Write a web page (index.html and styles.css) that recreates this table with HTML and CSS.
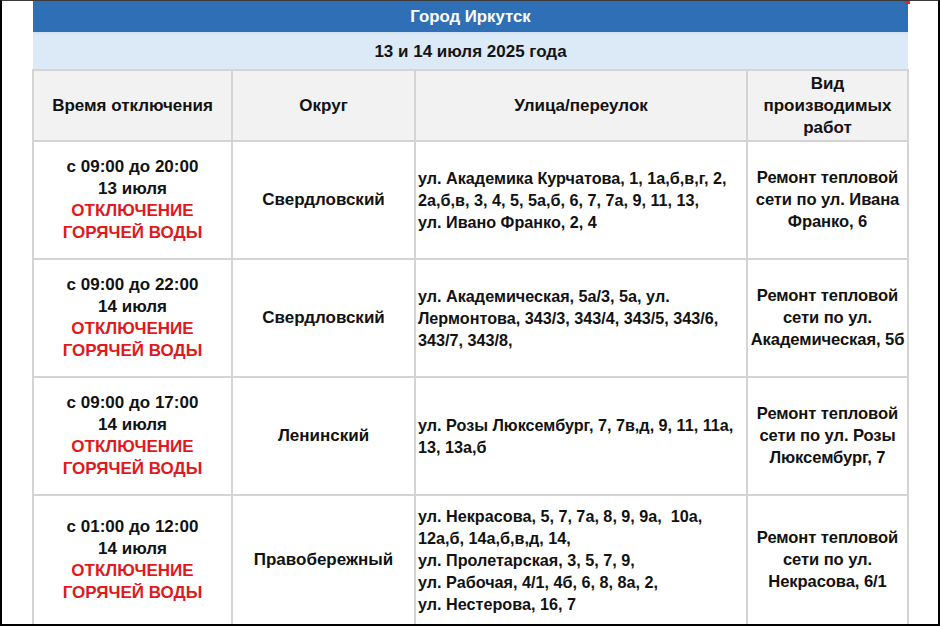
FILE: index.html
```html
<!DOCTYPE html>
<html lang="ru">
<head>
<meta charset="utf-8">
<title>Город Иркутск</title>
<link rel="stylesheet" href="styles.css">
</head>
<body>
<div class="frame">
  <table class="sched">
    <colgroup>
      <col class="c1"><col class="c2"><col class="c3"><col class="c4">
    </colgroup>
    <thead>
      <tr><th colspan="4" class="city">Город Иркутск</th></tr>
      <tr><th colspan="4" class="date">13 и 14 июля 2025 года</th></tr>
      <tr class="head">
        <th>Время отключения</th>
        <th>Округ</th>
        <th>Улица/переулок</th>
        <th>Вид производимых работ</th>
      </tr>
    </thead>
    <tbody>
      <tr>
        <td class="time">с 09:00 до 20:00<br>13 июля<br><span class="red">ОТКЛЮЧЕНИЕ<br>ГОРЯЧЕЙ ВОДЫ</span></td>
        <td class="dist">Свердловский</td>
        <td class="street">ул. Академика Курчатова, 1, 1а,б,в,г, 2,<br>2а,б,в, 3, 4, 5, 5а,б, 6, 7, 7а, 9, 11, 13,<br>ул. Ивано Франко, 2, 4</td>
        <td class="work">Ремонт тепловой<br>сети по ул. Ивана<br>Франко, 6</td>
      </tr>
      <tr>
        <td class="time">с 09:00 до 22:00<br>14 июля<br><span class="red">ОТКЛЮЧЕНИЕ<br>ГОРЯЧЕЙ ВОДЫ</span></td>
        <td class="dist">Свердловский</td>
        <td class="street">ул. Академическая, 5а/3, 5а, ул.<br>Лермонтова, 343/3, 343/4, 343/5, 343/6,<br>343/7, 343/8,</td>
        <td class="work">Ремонт тепловой<br>сети по ул.<br>Академическая, 5б</td>
      </tr>
      <tr>
        <td class="time">с 09:00 до 17:00<br>14 июля<br><span class="red">ОТКЛЮЧЕНИЕ<br>ГОРЯЧЕЙ ВОДЫ</span></td>
        <td class="dist">Ленинский</td>
        <td class="street">ул. Розы Люксембург, 7, 7в,д, 9, 11, 11а,<br>13, 13а,б</td>
        <td class="work">Ремонт тепловой<br>сети по ул. Розы<br>Люксембург, 7</td>
      </tr>
      <tr class="last">
        <td class="time">с 01:00 до 12:00<br>14 июля<br><span class="red">ОТКЛЮЧЕНИЕ<br>ГОРЯЧЕЙ ВОДЫ</span></td>
        <td class="dist">Правобережный</td>
        <td class="street">ул. Некрасова, 5, 7, 7а, 8, 9, 9а,&nbsp; 10а,<br>12а,б, 14а,б,в,д, 14,<br>ул. Пролетарская, 3, 5, 7, 9,<br>ул. Рабочая, 4/1, 4б, 6, 8, 8а, 2,<br>ул. Нестерова, 16, 7</td>
        <td class="work">Ремонт тепловой<br>сети по ул.<br>Некрасова, 6/1</td>
      </tr>
    </tbody>
  </table>
  <span class="corner"></span>
</div>
</body>
</html>
```
FILE: styles.css
```css
html, body {
  margin: 0;
  padding: 0;
  background: #ffffff;
}
.frame {
  position: relative;
  box-sizing: border-box;
  width: 940px;
  height: 626px;
  overflow: hidden;
  background: #ffffff;
  border-top: 1px solid #3a3a3a;
  border-left: 2px solid #000000;
  border-right: 2px solid #000000;
  border-bottom: 2px solid #000000;
  padding-left: 30px;
  font-family: "Liberation Sans", Arial, sans-serif;
  font-weight: bold;
  color: #121212;
}
.sched {
  border-collapse: collapse;
  width: 875px;
  table-layout: fixed;
  font-size: 17px;
  line-height: 22px;
}
.c1 { width: 199px; }
.c2 { width: 183px; }
.c3 { width: 332px; }
.c4 { width: 161px; }
.sched th, .sched td {
  border: 2px solid #d4d4d4;
  padding: 0 4px;
  vertical-align: middle;
  text-align: center;
  font-weight: bold;
}
.sched .city {
  background: #2f6fb5;
  color: #ffffff;
  height: 31px;
  font-size: 16.8px;
  border: none;
  border-bottom: 2px solid #d4e2f0;
  padding: 0;
}
.sched .date {
  background: #dce9f6;
  color: #141414;
  height: 35px;
  font-size: 17px;
  border-top: none;
  border-left: none;
  border-right: none;
  padding: 0;
}
.head th {
  background: #f2f2f2;
  height: 69px;
  font-size: 17px;
}
.sched td {
  height: 116px;
}
.sched td.street {
  text-align: left;
  font-size: 16.2px;
  padding-left: 2px;
  padding-right: 0;
}
.sched td.work {
  font-size: 16.6px;
  letter-spacing: -0.1px;
  white-space: nowrap;
  padding: 0;
}
.sched tr.last td {
  height: 128px;
}
.red {
  color: #e0191d;
}
.corner {
  position: absolute;
  top: -1px;
  left: 902px;
  width: 6px;
  height: 4px;
  background: #d22a2a;
  border-radius: 0 0 0 4px;
}
```
